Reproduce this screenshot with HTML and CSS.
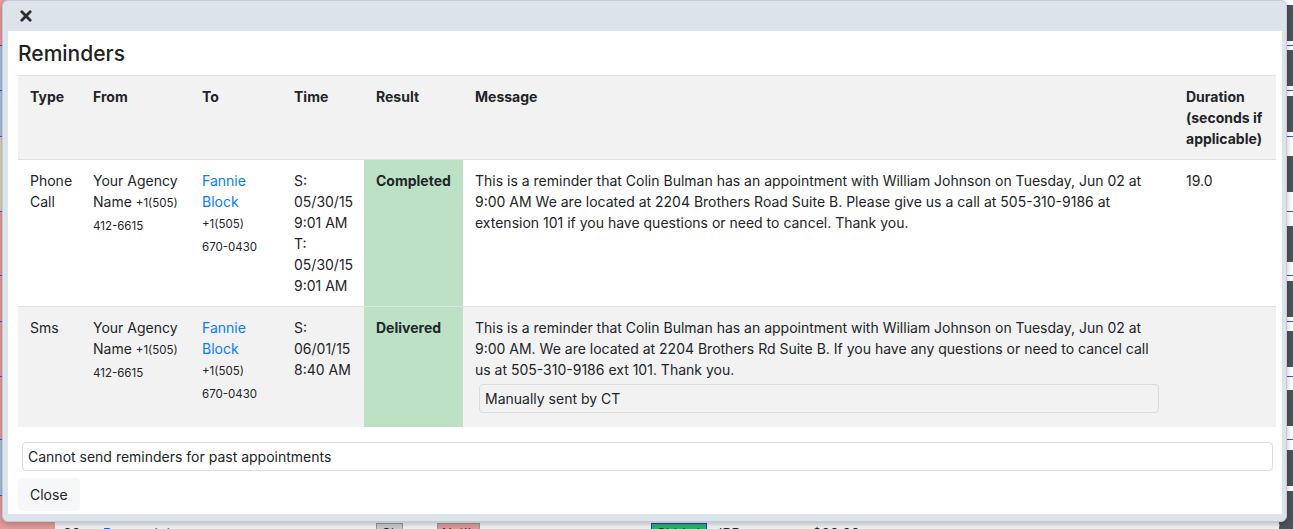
FILE: index.html
```html
<!DOCTYPE html>
<html lang="en">
<head>
    <meta charset="UTF-8">
    <meta name="viewport" content="width=device-width, initial-scale=1.0">
    <title>Reminders</title>
    <link rel="stylesheet" href="styles.css">
</head>
<body>
    <!-- schedule page behind the dialog -->
    <div class="page">
        <div class="bg-row h46"><span class="bg-tag pink"></span><span class="bg-btn"></span></div>
        <div class="bg-row h45"><span class="bg-tag blue"></span><span class="bg-btn"></span></div>
        <div class="bg-row h46"><span class="bg-tag blue"></span><span class="bg-btn"></span></div>
        <div class="bg-row h75"><span class="bg-tag beige"></span><span class="bg-btn"></span></div>
        <div class="bg-row h64"><span class="bg-tag pink"></span><span class="bg-btn"></span></div>
        <div class="bg-row h46"><span class="bg-tag pink"></span><span class="bg-btn"></span></div>
        <div class="bg-row h55"><span class="bg-tag pink"></span><span class="bg-btn"></span></div>
        <div class="bg-row h63"><span class="bg-tag pink"></span><span class="bg-btn"></span></div>
        <div class="bg-row h56"><span class="bg-tag blue"></span><span class="bg-btn"></span></div>
        <div class="bg-row h26"><span class="bg-tag pink"></span><span class="bg-btn"></span></div>
        <div class="bg-row last">
            <span class="bg-tag pink"></span>
            <span class="bg-text">30m</span>
            <a class="bg-link" href="#">Drama Johns</a>
            <span class="bg-chip grey">Ck</span>
            <span class="bg-chip red">Not'h</span>
            <span class="bg-chip green">Chk(✓)</span>
            <span class="bg-text irr">IRR</span>
            <span class="bg-text amount">$20.00</span>
            <span class="bg-btn"></span>
        </div>
    </div>

    <div class="modal">
        <div class="modal-bar">
            <button class="modal-x" aria-label="Close">
                <svg width="12" height="12" viewBox="0 0 12 12">
                    <path d="M1.8 1.8 L10.2 10.2 M10.2 1.8 L1.8 10.2" stroke="#2b2b2b" stroke-width="2.8" stroke-linecap="round" fill="none"/>
                </svg>
            </button>
        </div>
        <div class="modal-body">
            <h4>Reminders</h4>
            <table class="reminders">
                <colgroup>
                    <col style="width: 63px">
                    <col style="width: 109px">
                    <col style="width: 92px">
                    <col style="width: 82px">
                    <col style="width: 99px">
                    <col style="width: 711px">
                    <col style="width: 102px">
                </colgroup>
                <thead>
                    <tr>
                        <th>Type</th>
                        <th>From</th>
                        <th>To</th>
                        <th>Time</th>
                        <th>Result</th>
                        <th>Message</th>
                        <th>Duration (seconds if applicable)</th>
                    </tr>
                </thead>
                <tbody>
                    <tr>
                        <td>Phone Call</td>
                        <td>Your Agency Name <small>+1(505) 412-6615</small></td>
                        <td><a href="#">Fannie Block</a><br><small>+1(505) 670-0430</small></td>
                        <td>S: 05/30/15 9:01 AM<br>T: 05/30/15 9:01 AM</td>
                        <td class="result"><b>Completed</b></td>
                        <td>This is a reminder that Colin Bulman has an appointment with William Johnson on Tuesday, Jun 02 at 9:00 AM We are located at 2204 Brothers Road Suite B. Please give us a call at 505-310-9186 at extension 101 if you have questions or need to cancel. Thank you.</td>
                        <td>19.0</td>
                    </tr>
                    <tr class="striped">
                        <td>Sms</td>
                        <td>Your Agency Name <small>+1(505) 412-6615</small></td>
                        <td><a href="#">Fannie Block</a><br><small>+1(505) 670-0430</small></td>
                        <td>S: 06/01/15 8:40 AM</td>
                        <td class="result"><b>Delivered</b></td>
                        <td>
                            This is a reminder that Colin Bulman has an appointment with William Johnson on Tuesday, Jun 02 at 9:00 AM. We are located at 2204 Brothers Rd Suite B. If you have any questions or need to cancel call us at 505-310-9186 ext 101. Thank you.
                            <div class="note">Manually sent by CT</div>
                        </td>
                        <td></td>
                    </tr>
                </tbody>
            </table>
            <div class="notice">Cannot send reminders for past appointments</div>
            <button class="btn-close">Close</button>
        </div>
    </div>
</body>
</html>
```

FILE: styles.css
```css
body {
    margin: 0;
    font-family: Inter, "Liberation Sans", Arial, sans-serif;
    font-size: 14px;
    line-height: 21px;
    color: #212529;
    background-color: #fff;
    overflow: hidden;
}

/* page behind the dialog */
.page {
    width: 1293px;
    height: 529px;
}

.bg-row {
    display: flex;
    align-items: center;
    border-bottom: 1px solid #2f56e0;
    box-sizing: border-box;
}

.h26 { height: 26px; border-bottom: none; }
.h45 { height: 45px; }
.h46 { height: 46px; }
.h55 { height: 55px; }
.h56 { height: 56px; }
.h63 { height: 63px; }
.h64 { height: 64px; }
.h75 { height: 75px; }

.bg-row.last {
    height: 30px;
    align-items: flex-start;
    border-bottom: none;
    background-color: #f4f4f4;
}

.bg-tag {
    width: 55px;
    align-self: stretch;
    background-color: #e39b9b;
}

.bg-tag.blue { background-color: #a3bfdf; }
.bg-tag.beige { background-color: #d6d2b4; }

.bg-btn {
    width: 30px;
    height: 36px;
    margin-left: auto;
    margin-right: -16px;
    border-radius: 4px;
    background-color: #4d535a;
}

.bg-row.last .bg-btn {
    height: 30px;
    margin-top: 2px;
}

.bg-text {
    margin-left: 8px;
    padding-top: 1px;
    font-size: 14px;
}

.bg-link {
    margin-left: 10px;
    padding-top: 1px;
    color: #1a5fe0;
    text-decoration: none;
}

.bg-chip {
    margin-top: 1px;
    padding: 0 4px;
    font-size: 13px;
    line-height: 18px;
    border: 1px solid #999;
    background-color: #ccc;
}

.bg-chip.grey { margin-left: 186px; }
.bg-chip.red { margin-left: 34px; background-color: #e39b9b; }
.bg-chip.green { margin-left: 171px; background-color: #2bb56b; border-color: #1a3fd0; }
.irr { margin-left: 12px; }
.amount { margin-left: 72px; }

/* dialog */
.modal {
    position: absolute;
    left: 2px;
    top: 0;
    width: 1285px;
    height: 522px;
    box-sizing: border-box;
    border: 1px solid #c4cbd3;
    border-radius: 6px;
    background-color: #dce3eb;
    box-shadow: 0 2px 6px rgba(0, 0, 0, 0.25);
    display: flex;
    flex-direction: column;
}

.modal-bar {
    height: 30px;
    display: flex;
    align-items: center;
    padding-left: 16px;
}

.modal-x {
    border: none;
    background: none;
    padding: 0;
    width: 14px;
    height: 14px;
    display: flex;
    align-items: center;
    justify-content: center;
    cursor: pointer;
}

.modal-body {
    flex: 1;
    margin: 0 4px 7px 5px;
    padding: 0 6px 0 10px;
    background-color: #fff;
}

.modal-body h4 {
    margin: 10px 0 9px;
    font-size: 21px;
    line-height: 25px;
    font-weight: 500;
    color: #222;
}

/* reminders table */
.reminders {
    width: 1258px;
    table-layout: fixed;
    border-collapse: collapse;
}

.reminders th,
.reminders td {
    padding: 10px 12px;
    text-align: left;
    vertical-align: top;
    border-top: 1px solid #dee2e6;
}

.reminders thead th {
    background-color: #f2f2f2;
    font-weight: 700;
    border-top: 1px solid #dee2e6;
    border-bottom: 1px solid #dee2e6;
}

.reminders small {
    font-size: 11.5px;
}

.reminders a {
    color: #0a7bff;
    text-decoration: none;
}

.reminders .striped td {
    background-color: #f2f2f2;
}

.reminders td.result,
.reminders .striped td.result {
    background-color: #bde1c5;
}

.reminders .result b {
    font-weight: 700;
}

.note {
    margin: 4px 3px 4px 4px;
    padding: 3px 5px;
    border: 1px solid #dcdcdc;
    border-radius: 4px;
    background-color: #f2f2f2;
}

.notice {
    margin: 15px 3px 0 4px;
    padding: 3px 5px;
    border: 1px solid #dcdcdc;
    border-radius: 4px;
}

.btn-close {
    margin-top: 7px;
    padding: 6px 12px;
    border: none;
    border-radius: 4px;
    background-color: #f6f7f9;
    font-family: inherit;
    font-size: 14px;
    line-height: 21px;
    color: #212529;
    cursor: pointer;
}
```
